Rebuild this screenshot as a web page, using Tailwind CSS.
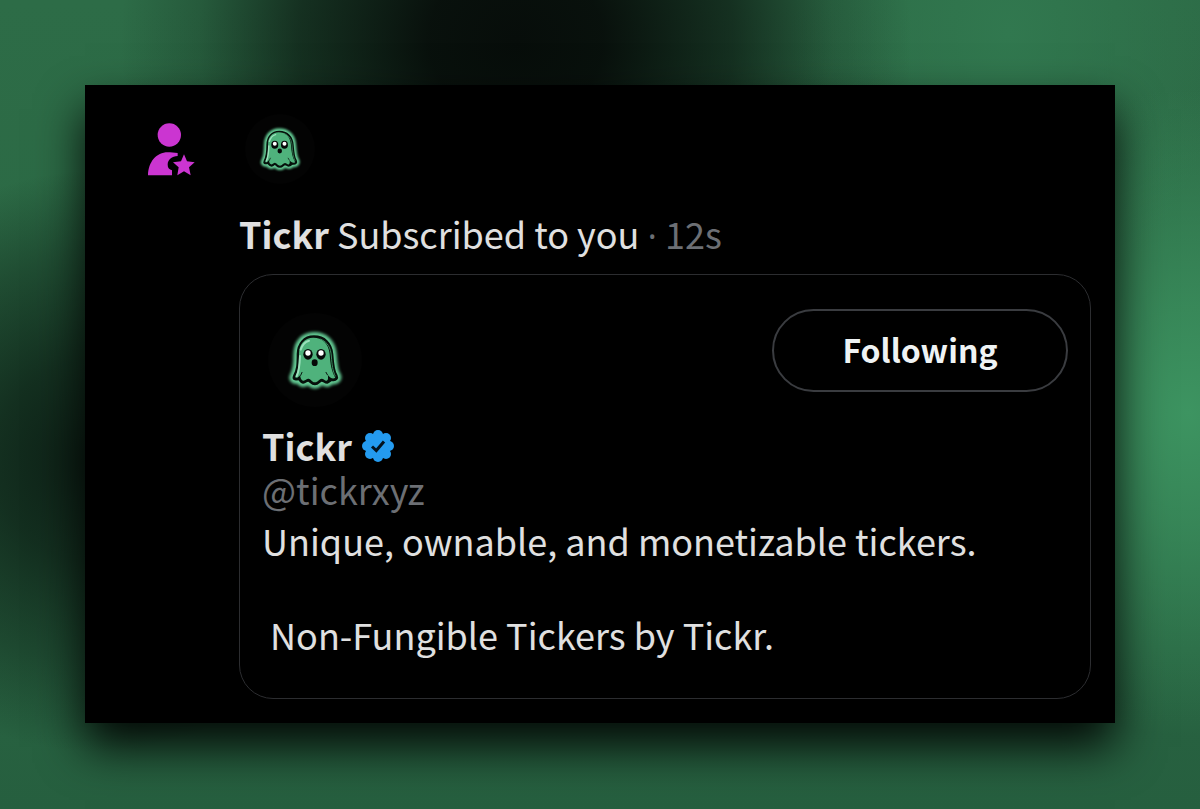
<!DOCTYPE html>
<html lang="en">

<head>
  <meta charset="UTF-8" />
  <meta name="viewport" content="width=device-width, initial-scale=1.0" />
  <title>Tickr subscribed to you</title>
  <script src="https://cdn.jsdelivr.net/npm/@tailwindcss/browser@4"></script>
  <style>
    body {
      font-family: "Noto Sans CJK SC", "Open Sans", sans-serif;
      background:
        radial-gradient(ellipse 33% 45% at 43% 5%, #070d0a 0%, #070d0af5 22%, #070d0aa0 55%, #070d0a30 80%, #070d0a00 100%),
        radial-gradient(ellipse 24% 36% at 8% 57%, #0c1d14 0%, #0c1d14c0 35%, #0c1d1460 70%, #0c1d1400 100%),
        radial-gradient(ellipse 22% 40% at 99% 51%, #3d9461 0%, #3d9461b0 35%, #3d946100 100%),
        radial-gradient(ellipse 18% 34% at 84% 4%, #31784f 0%, #31784f00 100%),
        linear-gradient(to bottom, #2d6c47 0%, #2b6944 50%, #265f3f 100%);
    }
  </style>
</head>

<body class="text-[#e0e0e0]">
  <svg class="hidden" aria-hidden="true">
    <symbol id="ghost" viewBox="27 9 282 282">
      <defs>
        <filter id="glow" x="-20%" y="-20%" width="140%" height="140%">
          <feGaussianBlur stdDeviation="4" />
        </filter>
      </defs>
      <circle cx="168" cy="150" r="141" fill="#030303" />
      <!-- glow, black outline, then the green body -->
      <path filter="url(#glow)" fill="#62c892" stroke="#62c892" stroke-width="28" stroke-linejoin="round" d="M165 80C135 80 118 102 117 132C117 165 116 181 106 198C102 207 108 210 118 206C124 209 125 216 132 217C139 218 142 210 148 211C154 212 157 222 168 222C178 222 182 211 188 211C195 211 198 218 205 217C211 216 213 209 220 209C231 211 236 205 232 197C223 185 221 160 219 132C216 100 196 80 165 80Z" />
      <path fill="#06100b" stroke="#06100b" stroke-width="8" stroke-linejoin="round" d="M165 80C135 80 118 102 117 132C117 165 116 181 106 198C102 207 108 210 118 206C124 209 125 216 132 217C139 218 142 210 148 211C154 212 157 222 168 222C178 222 182 211 188 211C195 211 198 218 205 217C211 216 213 209 220 209C231 211 236 205 232 197C223 185 221 160 219 132C216 100 196 80 165 80Z" />
      <path fill="#4fb27c" d="M163 83C135 83 120 104 120 132C120 167 118 186 108 201C111 205 117 204 124 194C123 204 128 212 134 212C140 211 143 205 149 206C156 207 159 217 168 217C177 217 181 206 188 206C194 206 198 213 203 212C208 210 208 203 206 194C213 204 222 208 229 203C217 184 214 160 212 132C209 100 190 83 163 83Z" />
      <path fill="none" stroke="#3a8a5e" stroke-width="3" d="M184 87C207 97 215 114 217 138C219 165 221 182 229 199" />
      <path fill="none" stroke="#9be0bb" stroke-width="6" stroke-linecap="round" d="M123 138C122 165 121 182 113 198M125 119C130 104 139 95 150 92" />
      <path fill="none" stroke="#0a1811" stroke-width="3" stroke-linecap="round" d="M125 196L129 187M205 194L201 187" />
      <ellipse cx="147" cy="133" rx="14" ry="16" fill="#050807" />
      <ellipse cx="186" cy="133" rx="14" ry="16" fill="#050807" />
      <ellipse cx="147" cy="129" rx="8" ry="8" fill="#fff" />
      <ellipse cx="186" cy="129" rx="8" ry="8" fill="#fff" />
      <ellipse cx="167" cy="158" rx="9" ry="10" fill="#050807" />
    </symbol>
  </svg>

  <main class="min-h-screen p-[85px]">
    <article class="flex gap-11 bg-black pt-[29px] pr-6 pb-6 pl-[62px] shadow-[0_24px_44px_rgb(0_0_0/0.9)]">
      <svg class="mt-2 h-[54px] w-12 shrink-0" viewBox="51 51 144 162" fill="#cb35d1" aria-hidden="true">
        <circle cx="118" cy="90" r="35" />
        <path d="M54 211C55 168 82 138 120 142L143 144V153C126 154 113 164 113 179C113 189 118 193 126 196V211Z" />
        <path d="M162 148L171 169L194 172L177 187L182 211L162 199L142 211L146 187L129 172L153 169Z" />
      </svg>

      <div class="min-w-0 flex-1">
        <svg class="ml-[6px] size-[70px]" role="img" aria-label="Tickr"><use href="#ghost" /></svg>

        <p class="mt-[26px] text-4xl/[47px]">
          <b>Tickr</b> Subscribed to you <span class="font-['Open_Sans'] text-[#6c6f74]">·</span> <span class="text-[#6c6f74]">12s</span>
        </p>

        <section class="mt-[15px] rounded-[34px] border border-[#2c2d30] px-[22px] pt-[34px] pb-10">
          <div class="flex items-start justify-between">
            <svg class="mt-1 ml-[6px] size-[94px]" role="img" aria-label="Tickr"><use href="#ghost" /></svg>
            <button class="h-[83px] w-[296px] rounded-full border-2 border-[#3a3c40] pb-1 text-[32px] font-bold text-[#eff3f4]">Following</button>
          </div>

          <h2 class="mt-4 flex items-center gap-[10px] text-4xl/[45px] font-bold">
            Tickr
            <svg class="size-8" viewBox="0 0 32 32" role="img" aria-label="Verified">
              <g fill="#249bf0">
                <circle cx="16" cy="16" r="13" />
                <circle cx="16" cy="5" r="5" />
                <circle cx="24" cy="8" r="5" />
                <circle cx="27" cy="16" r="5" />
                <circle cx="24" cy="24" r="5" />
                <circle cx="16" cy="27" r="5" />
                <circle cx="8" cy="24" r="5" />
                <circle cx="5" cy="16" r="5" />
                <circle cx="8" cy="8" r="5" />
              </g>
              <path d="M10 16.500L14.300 20.500L22 11.500" fill="none" stroke="#04121d" stroke-width="3" />
            </svg>
          </h2>
          <a href="#" class="block text-4xl/[43px] text-[#6c6f74]">@tickrxyz</a>
          <p class="mt-[6px] text-4xl/[47px] whitespace-pre-line">Unique, ownable, and monetizable tickers.

            &nbsp;Non-Fungible Tickers by Tickr.</p>
        </section>
      </div>
    </article>
  </main>
</body>

</html>
